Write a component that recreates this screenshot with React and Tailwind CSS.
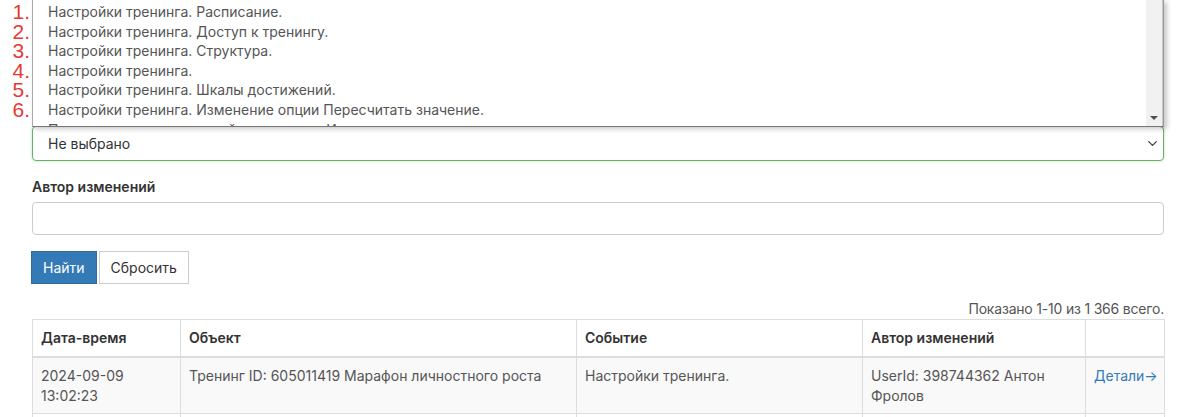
import { ChevronDown } from 'lucide-react'

const options = [
  'Настройки тренинга. Расписание.',
  'Настройки тренинга. Доступ к тренингу.',
  'Настройки тренинга. Структура.',
  'Настройки тренинга.',
  'Настройки тренинга. Шкалы достижений.',
  'Настройки тренинга. Изменение опции Пересчитать значение.',
  'Пользовательские настройки тренинга. Изменение опции доступа к заданиям.',
]

const cols = [
  { title: 'Дата-время', w: 'w-[148px]' },
  { title: 'Объект', w: 'w-[396px]' },
  { title: 'Событие', w: 'w-[286px]' },
  { title: 'Автор изменений', w: 'w-[223px]' },
  { title: '', w: 'w-[79px]' },
]

export default function App() {
  return (
    <div className="min-h-screen bg-white pl-[32px] pr-[35px] text-[14px] text-[#333] font-['Inter','Noto_Sans',sans-serif]">
      {/* открытый список фильтра */}
      <div className="relative">
        <div className="absolute -left-[28px] top-[2px] flex flex-col items-end w-[26px] text-[#e53a34] text-[21px] leading-[19.6px] font-['Liberation_Sans',sans-serif]">
          {[1, 2, 3, 4, 5, 6].map(n => <span key={n} className="h-[19.6px]">{n}.</span>)}
        </div>
        <div className="relative z-10 h-[127px] flex border-l border-r border-b border-l-[#aaa] border-r-[#999] border-b-[#777] bg-white shadow-[3px_2px_5px_rgba(0,0,0,0.22)] overflow-hidden">
          <div className="flex-1 pt-[2px] pl-[15px] text-[#555] leading-[19.6px] whitespace-nowrap">
            {options.map(o => <div key={o}>{o}</div>)}
          </div>
          <div className="w-[17px] bg-[#f1f1f1] flex flex-col justify-end items-center pb-[6px] border-r border-[#c8c8c8]">
            <div className="w-0 h-0 border-l-[4px] border-r-[4px] border-t-[4px] border-l-transparent border-r-transparent border-t-[#505050]" />
          </div>
        </div>
      </div>

      <div className="flex items-center justify-between h-[35px] -mt-[1px] border border-[#6cae6c] rounded-[4px] pl-[15px] pr-[3px] shadow-[0_0_3px_rgba(92,184,92,0.45)]">
        <span className="text-[#333]">Не выбрано</span>
        <ChevronDown size={15} strokeWidth={2.2} className="text-[#444]" />
      </div>

      <div className="mt-[16px] font-semibold text-[#333] leading-[20px]">Автор изменений</div>
      <div className="mt-[5px] h-[33px] border border-[#ccc] rounded-[4px]" />

      <div className="mt-[16px] flex gap-[2px] -ml-[1px]">
        <button className="h-[33px] px-[11px] bg-[#337ab7] border border-[#2e6da4] text-white">Найти</button>
        <button className="h-[33px] px-[11px] bg-white border border-[#ccc] text-[#333]">Сбросить</button>
      </div>

      <div className="mt-[15px] text-right text-[#555] leading-[20px] tracking-[-0.2px]">Показано 1-10 из 1 366 всего.</div>

      <table className="table-fixed w-full border-collapse">
        <thead>
          <tr>
            {cols.map(c => (
              <th key={c.title} className={`${c.w} text-left font-semibold text-[#333] px-[8px] py-[8px] leading-[20px] border border-[#ddd] border-b-2`}>
                {c.title}
              </th>
            ))}
          </tr>
        </thead>
        <tbody>
          <tr className="bg-[#f9f9f9] text-[#555] align-top">
            <td className="px-[8px] py-[8px] leading-[19.5px] border border-[#ddd]">2024-09-09<br />13:02:23</td>
            <td className="px-[8px] py-[8px] leading-[19.5px] border border-[#ddd]">Тренинг ID: 605011419 Марафон личностного роста</td>
            <td className="px-[8px] py-[8px] leading-[19.5px] border border-[#ddd]">Настройки тренинга.</td>
            <td className="px-[8px] py-[8px] leading-[19.5px] border border-[#ddd]">UserId: 398744362 Антон Фролов</td>
            <td className="px-[8px] py-[8px] leading-[19.5px] border border-[#ddd]">
              <a className="text-[#337ab7]">Детали→</a>
            </td>
          </tr>
          <tr>
            <td className="h-[40px] border border-[#ddd]" />
            <td className="border border-[#ddd]" />
            <td className="border border-[#ddd]" />
            <td className="border border-[#ddd]" />
            <td className="border border-[#ddd]" />
          </tr>
        </tbody>
      </table>
    </div>
  )
}
